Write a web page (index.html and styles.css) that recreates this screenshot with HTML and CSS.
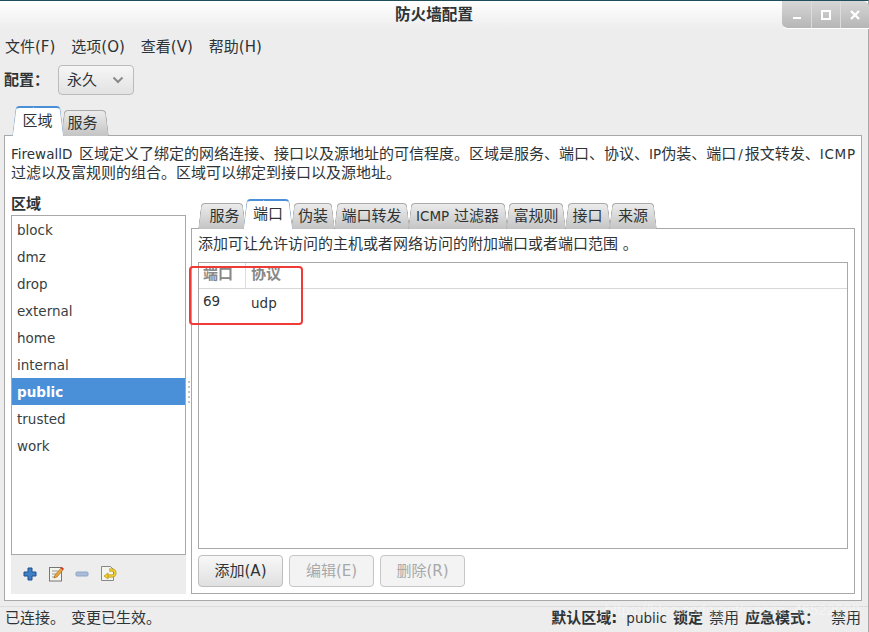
FILE: index.html
```html
<!DOCTYPE html>
<html lang="zh">
<head>
<meta charset="utf-8">
<title>防火墙配置</title>
<link rel="stylesheet" href="styles.css">
</head>
<body>
<div class="window">
  <header class="titlebar">
    <span></span>
    <h1 class="title">防火墙配置</h1>
    <div class="controls">
      <span class="ctl"><svg width="10" height="10" viewBox="0 0 10 10"><rect x="1" y="7" width="8" height="2" fill="#fff"/></svg></span>
      <span class="ctl"><svg width="10" height="10" viewBox="0 0 10 10"><rect x="1" y="1" width="8" height="8" fill="none" stroke="#fff" stroke-width="2"/></svg></span>
      <span class="ctl"><svg width="10" height="10" viewBox="0 0 10 10"><path d="M1 1l8 8M9 1l-8 8" stroke="#fff" stroke-width="2.4"/></svg></span>
    </div>
  </header>
  <nav class="menubar">
    <span>文件(F)</span><span>选项(O)</span><span>查看(V)</span><span>帮助(H)</span>
  </nav>
  <div class="config">
    <b>配置：</b>
    <div class="combo"><span>永久</span><svg width="12" height="8" viewBox="0 0 12 8"><path d="M1.5 1.5L6 6l4.500-4.500" fill="none" stroke="#8a8a8a" stroke-width="2"/></svg></div>
  </div>
  <div class="tabs outer-tabs">
    <span class="tab active">区域</span><span class="tab">服务</span>
  </div>
  <main class="panel">
    <p class="desc"><span class="lat first">FirewallD</span> 区域定义了绑定的网络连接、接口以及源地址的可信程度。区域是服务、端口、协议、<span class="lat">IP</span>伪装、端口<span class="lat slash">/</span>报文转发、<span class="lat wide">ICMP</span><br>过滤以及富规则的组合。区域可以绑定到接口以及源地址。</p>
    <div class="split">
      <aside class="zones">
        <h2 class="zones-title">区域</h2>
        <ul class="zone-list">
          <li>block</li><li>dmz</li><li>drop</li><li>external</li><li>home</li><li>internal</li><li class="sel">public</li><li>trusted</li><li>work</li>
        </ul>
        <div class="toolbar">
          <svg width="16" height="16" viewBox="0 0 16 16"><path d="M6 2h4v4h4v4h-4v4H6v-4H2V6h4z" fill="#3f7fc4" stroke="#1f4f90"/></svg>
          <svg width="16" height="16" viewBox="0 0 16 16"><rect x="1.500" y="1.500" width="12" height="13.500" fill="#f4f4ee" stroke="#777"/><path d="M4 5h6M4 8h4M4 11h3" stroke="#999"/><path d="M6 12l1-3 6-7 2 2-6 7z" fill="#e8a33a" stroke="#a5601a" stroke-width=".6"/><path d="M13 2l1-1 2 2-1 1z" fill="#d22"/></svg>
          <svg width="16" height="16" viewBox="0 0 16 16"><rect x="2" y="6" width="12" height="4" rx="1" fill="#a9bcd8" stroke="#8ea6c8"/></svg>
          <svg width="18" height="17" viewBox="0 0 18 17"><path d="M1.500 1.500h9l3 3v11h-12z" fill="#f4f4ee" stroke="#888"/><path d="M6 11h6a2.500 2.500 0 0 0 0-6H9" fill="none" stroke="#b8900f" stroke-width="3"/><path d="M6 11h6a2.500 2.500 0 0 0 0-6H9" fill="none" stroke="#f2d233" stroke-width="1.500"/><path d="M8 8l-4 3 4 3z" fill="#f2d233" stroke="#b8900f" stroke-width=".7"/></svg>
        </div>
      </aside>
      <div class="grip"><i></i><i></i><i></i><i></i><i></i></div>
      <section class="detail">
        <div class="tabs inner-tabs">
          <span class="tab">服务</span><span class="tab active">端口</span><span class="tab">伪装</span><span class="tab">端口转发</span><span class="tab"><span class="lat">ICMP</span> 过滤器</span><span class="tab">富规则</span><span class="tab">接口</span><span class="tab">来源</span>
        </div>
        <div class="detail-body">
          <p class="hint">添加可让允许访问的主机或者网络访问的附加端口或者端口范围 。</p>
          <div class="table-box">
            <div class="thead"><span class="c1">端口</span><span class="c2">协议</span></div>
            <div class="row"><span class="c1">69</span><span class="c2 proto">udp</span></div>
            <div class="mark"></div>
          </div>
          <div class="buttons">
            <button class="btn">添加(A)</button>
            <button class="btn" disabled>编辑(E)</button>
            <button class="btn" disabled>删除(R)</button>
          </div>
        </div>
      </section>
    </div>
  </main>
  <footer class="status">
    <span class="st-left"><span>已连接。</span><span>变更已生效。</span></span>
    <span class="st-right"><b>默认区域:</b><span class="lat">public</span><b>锁定</b><span>禁用</span><b>应急模式：</b><span>禁用</span></span>
    <span class="watermark">https://blog.csdn.net/weixin_46522099</span>
  </footer>
</div>
</body>
</html>
```
FILE: styles.css
```css
* { box-sizing: border-box; }
html, body { margin: 0; padding: 0; height: 100%; overflow: hidden; background: #fff; }
body { font: 15px/17px "DejaVu Sans", "Noto Sans CJK SC", sans-serif; color: #2e3436; }
p, h1, h2, ul { margin: 0; padding: 0; }
.lat { font-size: 13.5px; }
.first { margin-right: 2px; }
.slash { margin: 0 2px; }
.wide { letter-spacing: .7px; }
.window { width: 869px; height: 632px; background: #ededed; border-right: 1px solid #a8a8a8; border-top: 1px solid #1f4d5c; display: flex; flex-direction: column; position: relative; }
.titlebar { height: 28px; display: grid; grid-template-columns: 1fr auto 1fr; align-items: start; background: linear-gradient(#fff, #ededed); flex: none; }
.title { font-size: 15.6px; font-weight: bold; line-height: 28px; color: #2e3436; }
.controls { justify-self: end; display: flex; height: 28px; margin-right: -1px; background: linear-gradient(#d6d6d6, #b6b6b6); border-bottom: 1px solid #fff; border-radius: 0 6px 0 6px; }
.ctl { width: 29px; display: flex; align-items: center; justify-content: center; border-left: 1px solid #dcdcdc; }
.ctl:first-child { border-left: 0; }
.menubar { display: flex; gap: 16px; padding: 10px 5px 0; height: 36px; flex: none; }
.config { display: flex; align-items: center; height: 30px; padding-left: 4px; flex: none; }
.config b { width: 54px; white-space: nowrap; }
.combo { width: 76px; height: 30px; border: 1px solid #bbb; border-radius: 4px; background: linear-gradient(#f6f6f6, #e2e2e2); display: flex; align-items: center; justify-content: space-between; padding: 0 9px 0 8px; }
.tabs { display: flex; flex: none; align-items: flex-end; position: relative; z-index: 1; }
.tab { position: relative; z-index: 0; display: block; text-align: center; color: #2e3436; white-space: nowrap; flex: none; }
.tab::before, .tab::after { content: ""; position: absolute; top: 0; bottom: 0; z-index: -1; border: 0 solid #a9a9a9; background: linear-gradient(#ececec, #c4c4c4); transform-origin: bottom; }
.tab::before { left: 0; right: calc(50% - 1px); border-width: 1px 0 0 1px; border-top-left-radius: 4px; transform: skewX(-7deg); }
.tab::after { right: 0; left: calc(50% - 1px); border-width: 1px 1px 0 0; border-top-right-radius: 4px; transform: skewX(7deg); }
.tab.active { z-index: 1; }
.tab.active::before, .tab.active::after { background: #fff; border-color: #9db6d2; border-top: 2px solid #4a90d9; }
.outer-tabs { height: 29px; margin-top: 12px; padding-left: 12px; margin-bottom: -1px; }
.outer-tabs .tab { width: 47px; height: 26px; line-height: 27px; margin-left: -2px; padding-right: 4px; }
.outer-tabs .tab.active { width: 51px; height: 30px; line-height: 31px; margin-left: 0; padding-right: 0; }
.panel { width: 858px; height: 466px; margin-left: 4px; background: #fff; border: 1px solid #a8a8a8; padding: 9px 6px 6px; flex: none; }
.desc { line-height: 19px; height: 38px; white-space: nowrap; }
.split { display: flex; margin-top: 13px; height: 398px; }
.zones { width: 175px; display: flex; flex-direction: column; flex: none; background: #ededed; }
.zones-title { font-size: 15px; height: 19px; line-height: 17px; font-weight: bold; background: #fff; }
.zone-list { list-style: none; height: 340px; border: 1px solid #a8a8a8; background: #fff; flex: none; font-size: 13.5px; }
.zone-list li { height: 27px; line-height: 29px; padding-left: 5px; color: #3a3f41; }
.zone-list li.sel { background: #4a90d9; color: #fff; font-weight: bold; }
.toolbar { flex: 1; display: flex; align-items: center; gap: 10px; padding: 0 0 2px 11px; }
.grip { width: 5px; margin-top: 185px; display: flex; flex-direction: column; gap: 3px; align-items: center; flex: none; }
.grip i { width: 2px; height: 2px; background: #c4c4c4; }
.detail { width: 664px; flex: none; display: flex; flex-direction: column; margin-top: 3px; }
.inner-tabs { height: 30px; margin-left: 7px; margin-bottom: -1px; }
.inner-tabs .tab { height: 26px; line-height: 26px; margin-right: -1px; }
.inner-tabs .tab.active { height: 30px; line-height: 30px; margin-left: -1px; margin-right: -2px; }
.inner-tabs .tab:nth-child(1) { width: 47px; padding-left: 6px; }
.inner-tabs .tab:nth-child(2) { width: 50px; }
.inner-tabs .tab:nth-child(3) { width: 44px; }
.inner-tabs .tab:nth-child(4) { width: 75px; }
.inner-tabs .tab:nth-child(5) { width: 99px; }
.inner-tabs .tab:nth-child(6) { width: 60px; }
.inner-tabs .tab:nth-child(7) { width: 45px; }
.inner-tabs .tab:nth-child(8) { width: 48px; }
.detail-body { height: 366px; border: 1px solid #a8a8a8; background: #fff; padding: 6px 6px 6px; display: flex; flex-direction: column; }
.hint { height: 27px; line-height: 19px; white-space: nowrap; }
.table-box { position: relative; height: 287px; border: 1px solid #a8a8a8; }
.thead { display: flex; height: 26px; border-bottom: 1px solid #d8d8d8; font-weight: bold; color: #888; line-height: 23px; }
.thead .c1 { border-right: 1px solid #ddd; }
.c1 { width: 47px; padding-left: 4px; flex: none; }
.c2 { padding-left: 5px; }
.row { display: flex; height: 27px; line-height: 24px; font-size: 13.5px; }
.proto { line-height: 28px; }
.mark { position: absolute; left: -10px; top: 3px; width: 114px; height: 59px; border: 2px solid #f03a36; border-radius: 4px; }
.buttons { display: flex; gap: 6px; margin-top: 6px; }
.btn { width: 85px; height: 32px; font: inherit; color: #2e3436; border: 1px solid #bdbdbd; border-radius: 4px; background: linear-gradient(#f8f8f8, #e0e0e0); padding: 0; }
.btn:disabled { background: #f3f3f3; color: #a8a8a8; border-color: #c6c6c6; }
.status { flex: 1; margin-top: 5px; border-top: 1px solid #dcdcdc; display: flex; justify-content: space-between; align-items: center; padding: 0 7px 2px 5px; position: relative; white-space: nowrap; }
.st-left { display: flex; gap: 6px; }
.st-right { display: flex; align-items: center; gap: 6px; }
.st-right b:first-child { margin-right: 3px; }
.st-right b:nth-of-type(3) { margin-right: 5px; }
.watermark { position: absolute; right: 8px; top: -7px; font-family: "Liberation Sans", sans-serif; font-size: 15px; line-height: 20px; color: #fff; opacity: .4; }
```
